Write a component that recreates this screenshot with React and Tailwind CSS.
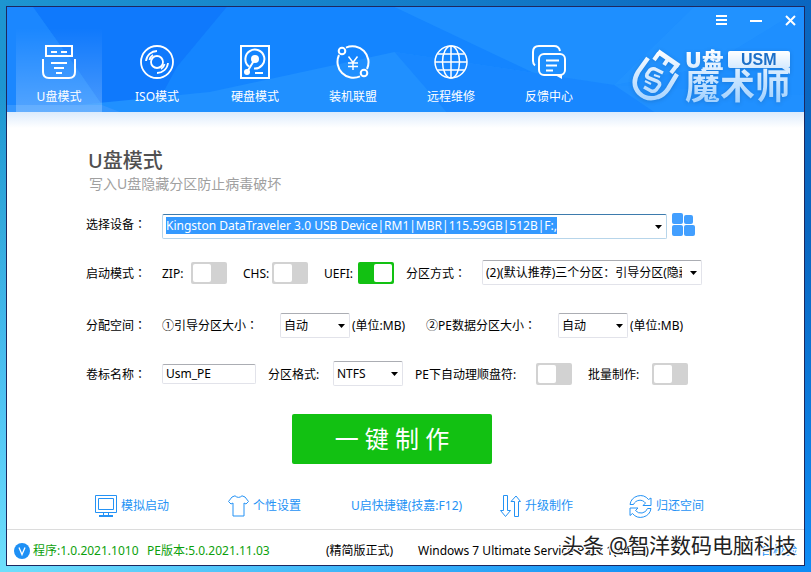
import { useEffect, useRef } from 'react'

const navigation = [
  { name: 'U盘模式', icon: UsbIcon },
  { name: 'ISO模式', icon: DiscIcon },
  { name: '硬盘模式', icon: DriveIcon },
  { name: '装机联盟', icon: YenIcon },
  { name: '远程维修', icon: GlobeIcon },
  { name: '反馈中心', icon: ChatIcon },
]

const tools = [
  { name: '模拟启动', icon: MonitorIcon },
  { name: '个性设置', icon: ShirtIcon },
  { name: 'U启快捷键(技嘉:F12)' },
  { name: '升级制作', icon: ArrowsIcon },
  { name: '归还空间', icon: RefreshIcon },
]

function classNames(...classes) {
  return classes.filter(Boolean).join(' ')
}

function UsbIcon() {
  return (
    <svg className="size-[34px]" viewBox="0 0 34 34" fill="none" stroke="white" strokeWidth="2" aria-hidden="true">
      <path d="M4 1h26v10H4zM9 7h6M19 7h6M1 14v13q0 6 6 6h20q6 0 6-6V14" />
      <path d="M9 18h16M12 23h10M14 28h6" />
    </svg>
  )
}

function DiscIcon() {
  return (
    <svg className="size-[34px]" viewBox="0 0 34 34" fill="none" stroke="white" strokeWidth="1.8" aria-hidden="true">
      <circle cx="17" cy="17" r="16" />
      <circle cx="17" cy="17" r="6" />
      <path d="M6 16A11 11 0 0 1 17 6M9.500 15A8 8 0 0 1 13 10M28 18a11 11 0 0 1-11 10M24.500 19a8 8 0 0 1-3.500 5" />
    </svg>
  )
}

function DriveIcon() {
  return (
    <svg className="h-[34px] w-[30px]" viewBox="0 0 30 34" fill="none" stroke="white" strokeWidth="2" aria-hidden="true">
      <path d="M1 1h28v32H1z" />
      <path d="M9 21.500A9.500 9.500 0 1 1 14 23.500" />
      <path d="M15 14L7 27M15 28h8" />
      <circle cx="15" cy="14" r="4" fill="white" stroke="none" />
      <circle cx="7" cy="27" r="3" fill="white" stroke="none" />
    </svg>
  )
}

function YenIcon() {
  return (
    <svg className="size-[34px]" viewBox="0 0 34 34" fill="none" stroke="white" strokeWidth="2" aria-hidden="true">
      <path d="M10 2.600A16 16 0 0 1 31 24M24 31.400A16 16 0 0 1 3 10" />
      <circle cx="6" cy="6" r="3.300" />
      <circle cx="28" cy="28" r="3.300" />
      <path d="M12.500 11.500l4.500 6 4.500-6M17 17.500V25M12 18h10M12 21.500h10" strokeWidth="1.500" />
    </svg>
  )
}

function GlobeIcon() {
  return (
    <svg className="size-[34px]" viewBox="0 0 34 34" fill="none" stroke="white" strokeWidth="1.500" aria-hidden="true">
      <circle cx="17" cy="17" r="16" />
      <ellipse cx="17" cy="17" rx="8.500" ry="16" />
      <path d="M17 1v32M1 17h32M3.500 9h27M3.500 25h27" />
    </svg>
  )
}

function ChatIcon() {
  return (
    <svg className="size-[34px]" viewBox="0 0 34 34" fill="none" stroke="white" strokeWidth="2" strokeLinejoin="round" aria-hidden="true">
      <path d="M3 20.500Q1 19 1 16V7q0-6 6-6h15q5 0 6 5" />
      <rect x="7" y="9" width="26" height="21" rx="5" />
      <path d="M23 30h7v4z" fill="white" stroke="none" />
      <path d="M14 15.500h13M14 20.500h11M14 25.500h7" />
    </svg>
  )
}

function MonitorIcon() {
  return (
    <svg className="size-[22px]" viewBox="0 0 22 22" fill="none" stroke="currentColor" aria-hidden="true">
      <path d="M.5.500h21v17H.5zM3.500 3.500h15v11h-15zM8.500 17.500v3M13.500 17.500v3" />
      <path d="M4 21h14" strokeWidth="2" />
    </svg>
  )
}

function ShirtIcon() {
  return (
    <svg className="h-[22px] w-[21px]" viewBox="0 0 21 22" fill="none" stroke="currentColor" aria-hidden="true">
      <path d="M7 .8Q10.500 4 14 .8l3 1.200 3.500 4.500-2.500 2.500-2-1V21H5V8L3 9 .5 6.500 4 2z" />
    </svg>
  )
}

function ArrowsIcon() {
  return (
    <svg className="h-[23px] w-[21px]" viewBox="0 0 21 23" fill="none" stroke="currentColor" aria-hidden="true">
      <path d="M3.500.500h4v15h3L5.500 21.500.5 15.500h3zM14.500 21.500h4v-15h2L16 1l-5 5.500h3.500z" />
    </svg>
  )
}

function RefreshIcon() {
  return (
    <svg className="size-[23px]" viewBox="0 0 23 23" fill="none" stroke="currentColor" aria-hidden="true">
      <path d="M1 9.500A10.500 10.500 0 0 1 19.500 4.500L22 3v7.500h-8l2.500-2.500A7 7 0 0 0 4.500 9.500z" />
      <path d="M22 13.500A10.500 10.500 0 0 1 3.500 18.500L1 20.500V13h8l-2.500 2.500a7 7 0 0 0 12-2z" />
    </svg>
  )
}

function HeaderFacets() {
  return (
    <svg className="absolute inset-0 h-full w-full" viewBox="0 0 798 105" preserveAspectRatio="none" aria-hidden="true">
      <path d="M0 0h798v105H0z" fill="#1485ff" />
      <path d="M26 0h194l-50 60-24 45H100L73 66z" fill="#0f79fc" />
      <path d="M0 0h26l47 66 27 39H0z" fill="#1b87ff" />
      <path d="M388 0h410v105H610z" fill="#1e8fff" />
      <path d="M388 45l220 33 190 10v17H0L203 85z" fill="#2090ff" />
      <path d="M388 45l220 33 40 27H440z" fill="#1887ff" />
      <path d="M0 98h95l18 7H0z" fill="#3496ff" />
      <path d="M608 78l80-78h110L700 60z" fill="#2b9aff" opacity="0.300" />
    </svg>
  )
}

function Logo() {
  return (
    <div className="flex items-start gap-1 drop-shadow-sm">
      <svg className="h-[54px] w-[49px]" viewBox="0 0 49 54" fill="none" aria-hidden="true">
        <defs>
          <linearGradient id="shield" x1="0" y1="0" x2="0" y2="54" gradientUnits="userSpaceOnUse">
            <stop offset="0" stopColor="#ffffff" />
            <stop offset="1" stopColor="#a4d2ff" />
          </linearGradient>
        </defs>
        <g stroke="url(#shield)" strokeWidth="4.500">
          <path d="M16 9L6 23Q-1 35 7 44q8 8 19 4 6-2 10-8l9-15" />
          <path d="M26 2.500l21 14.500" strokeWidth="5" />
          <path d="M27 4l-5 7M36 10l-4 6M45 16l-6 8" strokeWidth="4" />
          <path d="M31 24l-8-4q-3-1-5 1l-3 4q-1 3 2 4l8 3q4 2 2 5l-3 4q-2 2-5 1l-7-4" strokeWidth="3.500" />
          <path d="M28 28l-6-2M13 32l6 3" strokeWidth="2" />
        </g>
      </svg>
      <div className="bg-linear-to-b from-white to-[#9fd0ff] bg-clip-text font-bold text-transparent">
        <div className="flex h-[20px] items-center gap-1">
          <span className="text-[22px] leading-[20px] font-black">U盘</span>
          <span className="relative h-[17px] flex-1 rounded-xs bg-linear-to-b from-white to-[#d5eaff] text-center font-['Liberation_Sans',sans-serif] text-base leading-[17px] text-[#1c6fc8]">
            USM
            <svg className="absolute top-full right-0 h-1.5 w-2" viewBox="0 0 8 6" aria-hidden="true">
              <path d="M0 0h8v6z" fill="#d5eaff" />
            </svg>
          </span>
        </div>
        <div className="text-[35px] leading-[34px]">魔术师</div>
      </div>
    </div>
  )
}

// the fullwidth colon is centred in its cell only in the JP font
function Colon() {
  return <span className="font-['Noto_Sans_CJK_JP',sans-serif]">：</span>
}

function Toggle({ id, defaultChecked }) {
  return (
    <input
      id={id}
      type="checkbox"
      role="switch"
      defaultChecked={defaultChecked}
      className="flex h-[22px] w-9 shrink-0 appearance-none items-center rounded-xs bg-[#d2d2d2] px-0.5 before:size-[18px] before:rounded-xs before:bg-white checked:justify-end checked:bg-[#12c112]"
    />
  )
}

function Caret() {
  return (
    <svg className="pointer-events-none absolute top-[11px] right-[5px] h-1 w-[7px]" viewBox="0 0 7 4" aria-hidden="true">
      <path d="M0 0h7L3.500 4z" fill="black" />
    </svg>
  )
}

function Select({ id, className, options }) {
  return (
    <div className={classNames('relative shrink-0', className)}>
      <select
        id={id}
        className="block h-[25px] w-full appearance-none rounded-xs border border-[#e2e3ea] border-t-[#abadb3] bg-white pr-[19px] pl-[3px]"
      >
        {options.map((option) => (
          <option key={option}>{option}</option>
        ))}
      </select>
      <Caret />
    </div>
  )
}

export default function App() {
  const deviceRef = useRef(null)

  useEffect(() => {
    deviceRef.current.focus()
    deviceRef.current.select()
  }, [])

  return (
    <div className="flex min-h-screen bg-[radial-gradient(ellipse_at_bottom_left,#6fdffb,transparent_60%),linear-gradient(to_bottom,transparent_40%,#0f8df6),linear-gradient(to_right,#1d95d1,#0a66c0)] p-1.5 font-['Noto_Sans','Noto_Sans_CJK_SC',sans-serif] text-xs text-black">
      <div className="relative flex flex-1 flex-col border border-[#1c2860] bg-white">
        <header className="relative flex h-[105px] shrink-0 justify-between">
          <HeaderFacets />
          <nav className="relative flex gap-3 pl-[9px]">
            {navigation.map((item, index) => (
              <button
                key={item.name}
                type="button"
                className={classNames(
                  index === 0 && 'bg-linear-to-b from-transparent from-20% to-white/25',
                  'flex w-[86px] flex-col items-center gap-2 pt-[38px] text-white'
                )}
              >
                <item.icon />
                <span className="leading-5">{item.name}</span>
              </button>
            ))}
          </nav>
          <div className="relative flex flex-col items-end">
            <div className="flex h-[26px] items-center gap-[23px] pr-2 text-white">
              <button type="button" aria-label="菜单">
                <svg className="size-[11px]" viewBox="0 0 11 11" stroke="currentColor" strokeWidth="2">
                  <path d="M0 1h11M0 5h11M0 9h11" />
                </svg>
              </button>
              <button type="button" aria-label="最小化">
                <svg className="h-[11px] w-3" viewBox="0 0 12 11" stroke="currentColor" strokeWidth="2">
                  <path d="M0 6h12" />
                </svg>
              </button>
              <button type="button" aria-label="关闭">
                <svg className="size-[11px]" viewBox="0 0 11 11" stroke="currentColor" strokeWidth="2">
                  <path d="M1 1l9 9M10 1l-9 9" />
                </svg>
              </button>
            </div>
            <div className="mt-4 pr-3.5">
              <Logo />
            </div>
          </div>
        </header>

        <main className="flex flex-1 flex-col bg-linear-to-b from-[#dcebfc] to-white to-[16px] pt-[37px] pl-[79px]">
          <h1 className="pl-0.5 text-xl leading-6 font-medium text-[#505050]">U盘模式</h1>
          <p className="pl-[3px] text-sm leading-[21px] text-[#a0a0a0]">写入U盘隐藏分区防止病毒破坏</p>

          <div className="mt-5 flex h-[25px] items-center">
            <label htmlFor="device" className="w-[76px] pb-1">选择设备<Colon /></label>
            <div className="relative w-[505px]">
              <input
                id="device"
                ref={deviceRef}
                type="text"
                defaultValue="Kingston DataTraveler 3.0 USB Device|RM1|MBR|115.59GB|512B|F:,"
                className="block h-[25px] w-full rounded-xs border border-[#b7d5ea] border-t-[#3d7bad] pr-5 pb-0.5 pl-[3px] outline-none selection:bg-[#3399ff] selection:text-white"
              />
              <Caret />
            </div>
            <button type="button" aria-label="刷新设备" className="ml-[5px] pb-1">
              <svg className="size-[23px]" viewBox="0 0 23 23" fill="#429fff">
                <rect x="0" y="0" width="11" height="11" rx="2" />
                <rect x="12" y="2" width="9" height="9" rx="2" />
                <rect x="0" y="12" width="11" height="11" rx="2" />
                <rect x="12" y="12" width="11" height="11" rx="2" />
              </svg>
            </button>
          </div>

          <div className="mt-[21px] flex h-[25px] items-center">
            <span className="w-[76px] pt-0.5">启动模式<Colon /></span>
            <label htmlFor="zip" className="w-[29px] pt-0.5">ZIP:</label>
            <Toggle id="zip" />
            <label htmlFor="chs" className="ml-4 w-[29px] pt-0.5">CHS:</label>
            <Toggle id="chs" />
            <label htmlFor="uefi" className="ml-4 w-[34px] pt-0.5">UEFI:</label>
            <Toggle id="uefi" defaultChecked />
            <label htmlFor="scheme" className="ml-3 w-[76px] pt-0.5">分区方式<Colon /></label>
            <Select id="scheme" className="w-[220px]" options={['(2)(默认推荐)三个分区：引导分区(隐藏)']} />
          </div>

          <div className="mt-7 flex h-[25px] items-center">
            <span className="w-[76px]">分配空间<Colon /></span>
            <label htmlFor="boot-size" className="w-[118px]">①引导分区大小<Colon /></label>
            <Select id="boot-size" className="w-[70px]" options={['自动']} />
            <span className="ml-0.5 w-[74px]">(单位:MB)</span>
            <label htmlFor="data-size" className="w-[132px]">②PE数据分区大小<Colon /></label>
            <Select id="data-size" className="w-[70px]" options={['自动']} />
            <span className="ml-0.5">(单位:MB)</span>
          </div>

          <div className="mt-[23px] flex h-[25px] items-center">
            <label htmlFor="volume" className="w-[76px] pt-0.5">卷标名称<Colon /></label>
            <input
              id="volume"
              type="text"
              defaultValue="Usm_PE"
              className="h-5 w-[94px] rounded-xs border border-[#e2e3ea] border-t-[#abadb3] px-[3px]"
            />
            <label htmlFor="format" className="ml-3 w-[65px] pt-0.5">分区格式:</label>
            <Select id="format" className="w-[70px]" options={['NTFS', 'FAT32', 'exFAT']} />
            <label htmlFor="letters" className="ml-3 w-[121px] pt-0.5">PE下自动理顺盘符:</label>
            <Toggle id="letters" />
            <label htmlFor="batch" className="ml-4 w-16 pt-0.5">批量制作:</label>
            <Toggle id="batch" />
          </div>

          <button type="button" className="mt-7 ml-[206px] h-[50px] w-[200px] rounded-xs bg-[#12c112] text-2xl text-white">
            一 键 制 作
          </button>

          <div className="mt-[30px] grid h-6 grid-cols-[133px_123px_149px_129px_auto] items-center pl-[9px] text-[#2492f5]">
            {tools.map((tool) => (
              <a key={tool.name} href="#" className="flex items-center gap-1">
                {tool.icon && <tool.icon />}
                <span className="whitespace-nowrap">{tool.name}</span>
              </a>
            ))}
          </div>
        </main>

        <footer className="flex h-9 shrink-0 items-center border-t border-[#dcdcdc] px-[7px] pt-1.5 whitespace-nowrap">
          <svg className="size-4" viewBox="0 0 16 16" aria-hidden="true">
            <circle cx="8" cy="8" r="8" fill="#1e90f5" />
            <path d="M5 4.500L8 11.500l3-7" fill="none" stroke="white" strokeWidth="1.300" />
          </svg>
          <span className="ml-[3px] w-[114px] text-[#0c9f0c]">程序:1.0.2021.1010</span>
          <span className="w-[179px] text-[#0c9f0c]">PE版本:5.0.2021.11.03</span>
          <span className="w-[92px]">(精简版正式)</span>
          <span>Windows 7 Ultimate Service Pack 1(64bit)</span>
          <a href="#" className="ml-auto text-[#2492f5]">自校验</a>
        </footer>

        <div className="pointer-events-none absolute right-2 bottom-1 text-[21px] leading-8 whitespace-nowrap text-[#222] [text-shadow:-1px_-1px_0_#fff,1px_-1px_0_#fff,-1px_1px_0_#fff]">
          头条 @智洋数码电脑科技
        </div>
      </div>
    </div>
  )
}
